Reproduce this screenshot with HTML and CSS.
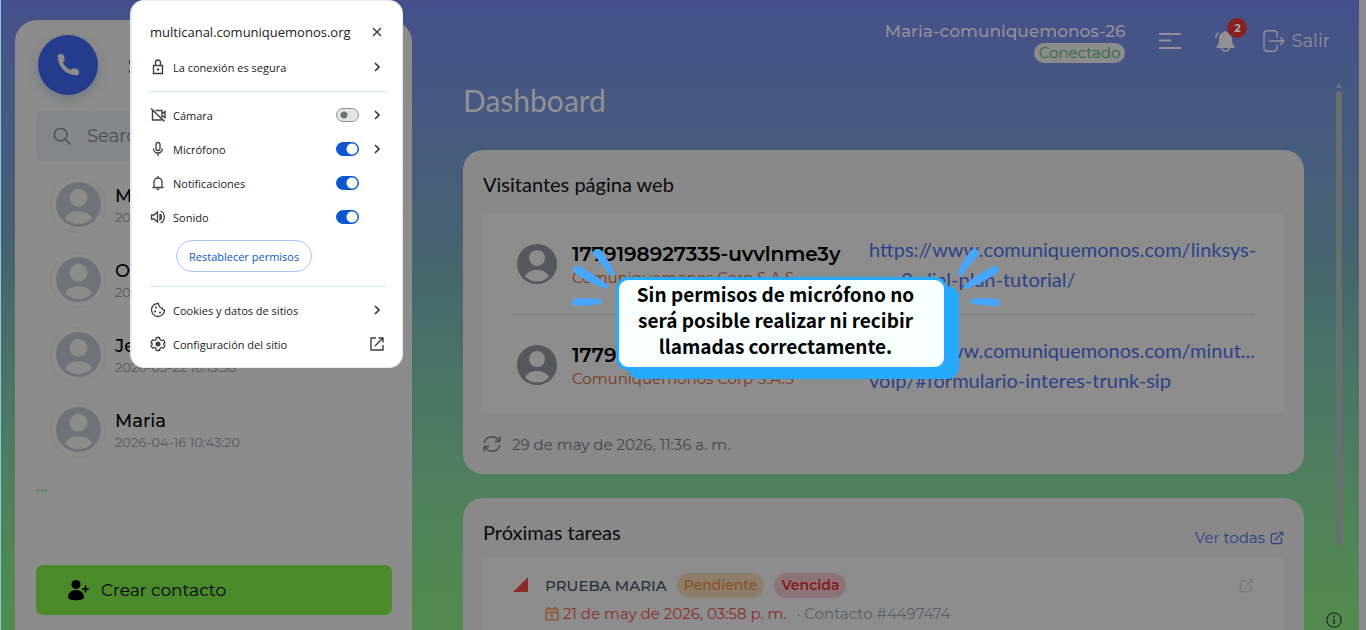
FILE: index.html
```html
<!DOCTYPE html>
<html lang="es">
<head>
    <meta charset="UTF-8">
    <meta name="viewport" content="width=device-width, initial-scale=1.0">
    <title>Dashboard</title>
    <link rel="stylesheet" href="styles.css">
</head>
<body>
    <!-- iconos compartidos -->
    <svg class="sprite" aria-hidden="true">
        <symbol id="user" viewBox="0 0 40 40">
            <path fill="currentColor" fill-rule="evenodd" d="M20 0a20 20 0 1 0 0 40a20 20 0 1 0 0-40zM20 6a8 8 0 1 1 0 16a8 8 0 1 1 0-16zM8 32.500C10 28 15 26 20 26s10 2 12 6.500C29 35.500 25 37.500 20 37.500S11 35.500 8 32.500z"/>
        </symbol>
        <symbol id="chevron" viewBox="0 0 12 12">
            <path fill="none" stroke="currentColor" stroke-width="1.600" d="M4 2l4 4l-4 4"/>
        </symbol>
        <symbol id="external" viewBox="0 0 16 16">
            <path fill="none" stroke="currentColor" stroke-width="1.400" stroke-linecap="round" stroke-linejoin="round" d="M8 3H3.500A2 2 0 0 0 1.500 5v7.500a2 2 0 0 0 2 2H11a2 2 0 0 0 2-2V8M6 10l8.500-8.500M11 1.500h3.500V5"/>
        </symbol>
    </svg>

    <div class="page">
        <aside class="sidebar">
            <div class="phone">
                <button class="phone-btn" aria-label="Llamar">
                    <svg viewBox="0 0 24 24" width="24" height="24"><path fill="none" stroke="currentColor" stroke-width="4" stroke-linecap="round" d="M4 4c0 9 7 16 16 16"/><path fill="currentColor" d="M1.500 3.500Q1.500 1 4 1h1.500Q7.500 1 8 3l.7 3.500Q9 8.500 7 9L4 9zM20.500 22.500Q23 22.500 23 20v-1.500Q23 16.500 21 16l-3.500-.7Q15.500 15 15 17v3z"/></svg>
                </button>
                <h2>S</h2>
            </div>
            <label class="search">
                <svg viewBox="0 0 20 20" width="18" height="18"><path fill="none" stroke="currentColor" stroke-width="1.600" stroke-linecap="round" d="M8.500 1.500a7 7 0 1 0 0 14a7 7 0 1 0 0-14M13.500 13.500L19 19"/></svg>
                <input type="search" placeholder="Search" aria-label="Search">
            </label>
            <ul class="contacts">
                <li>
                    <span class="ring"><svg><use href="#user"/></svg></span>
                    <div><strong>M</strong><small>20</small></div>
                </li>
                <li>
                    <span class="ring"><svg><use href="#user"/></svg></span>
                    <div><strong>O</strong><small>20</small></div>
                </li>
                <li>
                    <span class="ring"><svg><use href="#user"/></svg></span>
                    <div><strong>Je</strong><small>2026-05-22 16:13:38</small></div>
                </li>
                <li>
                    <span class="ring"><svg><use href="#user"/></svg></span>
                    <div><strong>Maria</strong><small>2026-04-16 10:43:20</small></div>
                </li>
            </ul>
            <p class="more">...</p>
            <button class="create">
                <svg viewBox="0 0 22 22" width="22" height="22"><circle cx="9" cy="5.500" r="4.500" fill="currentColor"/><path fill="currentColor" d="M1 19c0-5 3-8 8-8s8 3 8 8c-2 3-14 3-16 0z"/><path stroke="currentColor" stroke-width="1.600" d="M18.500 6.500v7M15 10h7"/></svg>
                Crear contacto
            </button>
        </aside>

        <div class="main">
            <header class="topbar">
                <div class="account">
                    <span class="username">Maria-comuniquemonos-26</span>
                    <span class="status">Conectado</span>
                </div>
                <button class="icon-btn menu" aria-label="Menú">
                    <svg viewBox="0 0 22 16" width="22" height="16"><path stroke="currentColor" stroke-width="2" d="M0 1h22M0 7.500h12M0 15h22"/></svg>
                </button>
                <button class="icon-btn bell" aria-label="Notificaciones">
                    <svg viewBox="0 0 20 22" width="20" height="22"><path fill="currentColor" d="M10.500 1a1.500 1.500 0 0 1 1.500 1c4 .7 5 4 5 7.500c0 4 1 5.500 2.500 7q.5 1.500-1 1.500h-16q-1.500 0-1-1.500C3 15 4 13.500 4 9.500C4 6 5 2.700 9 2a1.500 1.500 0 0 1 1.500-1z"/><path fill="none" stroke="currentColor" stroke-width="1.500" d="M7 18a3.500 3 0 0 0 7 0M.8 8C.8 5 2 3.500 3.500 2.200"/></svg>
                    <span class="badge">2</span>
                </button>
                <button class="icon-btn logout">
                    <svg viewBox="0 0 22 22" width="22" height="22"><path fill="none" stroke="currentColor" stroke-width="1.400" stroke-linecap="round" stroke-linejoin="round" d="M14 7V3.500A3 3 0 0 0 11 .8H4A3 3 0 0 0 1 3.500v15a3 3 0 0 0 3 2.700h7a3 3 0 0 0 3-2.700V15M6.500 11h14.500M17.500 7.500L21 11l-3.500 3.500"/></svg>
                    Salir
                </button>
            </header>

            <div class="scroll-area">
                <main class="content">
                    <h1>Dashboard</h1>

                    <section class="card">
                        <h3>Visitantes página web</h3>
                        <div class="panel visitors">
                            <article class="visitor">
                                <svg class="avatar"><use href="#user"/></svg>
                                <div><strong>1779198927335-uvvlnme3y</strong><span>Comuniquemonos Corp S.A.S</span></div>
                                <a href="#">https://www.comuniquemonos.com/linksys-<br>pap2-dial-plan-tutorial/</a>
                            </article>
                            <article class="visitor">
                                <svg class="avatar"><use href="#user"/></svg>
                                <div><strong>1779</strong><span>Comuniquemonos Corp S.A.S</span></div>
                                <a href="#">https://www.comuniquemonos.com/minut...<br>voip/#formulario-interes-trunk-sip</a>
                            </article>
                        </div>
                        <p class="updated">
                            <svg viewBox="0 0 18 18" width="18" height="18"><path fill="none" stroke="currentColor" stroke-width="1.400" stroke-linecap="round" stroke-linejoin="round" d="M1.500 7.500C2.500 4 5.500 1.800 9 1.800c3 0 5.500 1.500 7.500 4.500M16.800 2v4.500h-4.500M16.500 10.500c-1 3.500-4 5.700-7.500 5.700c-3 0-5.500-1.500-7.500-4.500M1.200 16v-4.500h4.500"/></svg>
                            29 de may de 2026, 11:36 a. m.
                        </p>
                    </section>

                    <section class="card">
                        <div class="card-head">
                            <h3>Próximas tareas</h3>
                            <a href="#">Ver todas <svg width="14" height="14"><use href="#external"/></svg></a>
                        </div>
                        <div class="panel task">
                            <svg class="priority" viewBox="0 0 15 15" width="15" height="15"><path fill="currentColor" d="M15 0v15H0z"/></svg>
                            <div class="task-body">
                                <div class="task-title">
                                    <span>PRUEBA MARIA</span>
                                    <em class="tag pending">Pendiente</em>
                                    <em class="tag overdue">Vencida</em>
                                </div>
                                <div class="task-date">
                                    <svg viewBox="0 0 14 14" width="14" height="14"><path fill="none" stroke="currentColor" stroke-width="1.400" d="M2.500 2h9q1.500 0 1.500 1.500v8q0 1.500-1.500 1.500h-9Q1 13 1 11.500v-8Q1 2 2.500 2zM1 5.500h12M4 0v3M10 0v3M5.500 8H7v3.500"/></svg>
                                    <time>21 de may de 2026, 03:58 p. m.</time>
                                    <span>· Contacto #4497474</span>
                                </div>
                            </div>
                            <a class="open" href="#" aria-label="Abrir tarea"><svg width="15" height="15"><use href="#external"/></svg></a>
                        </div>
                    </section>
                </main>
                <div class="scrollbar"><i class="arrow"></i><i class="thumb"></i></div>
            </div>
        </div>
    </div>

    <svg class="info" viewBox="0 0 16 16" width="16" height="16"><circle cx="8" cy="8" r="7.200" fill="none" stroke="currentColor" stroke-width="1.200"/><path stroke="currentColor" stroke-width="1.600" d="M8 3.500v2M8 7v5"/></svg>

    <!-- permisos del sitio -->
    <div class="popup">
        <div class="popup-head">
            <b>multicanal.comuniquemonos.org</b>
            <button aria-label="Cerrar"><svg viewBox="0 0 10 10" width="10" height="10"><path stroke="currentColor" stroke-width="1.300" d="M1 1l8 8M9 1L1 9"/></svg></button>
        </div>
        <div class="row">
            <svg class="ico" viewBox="0 0 16 16"><path fill="none" stroke="currentColor" stroke-width="1.400" d="M3.500 6.500h9v8h-9zM5.500 6V3.500a2.500 2.500 0 0 1 5 0V6"/><circle cx="8" cy="10.500" r="1.200" fill="currentColor"/></svg>
            <span>La conexión es segura</span>
            <svg class="chev"><use href="#chevron"/></svg>
        </div>
        <hr>
        <div class="row">
            <svg class="ico" viewBox="0 0 16 16"><path fill="none" stroke="currentColor" stroke-width="1.400" d="M1 1.500l13.500 13M5.500 3.500H12V7l3-2.500v6L12 8.500v2M2.500 3.500v9.500H11.500"/></svg>
            <label for="cam">Cámara</label>
            <input type="checkbox" id="cam" class="switch">
            <svg class="chev"><use href="#chevron"/></svg>
        </div>
        <div class="row">
            <svg class="ico" viewBox="0 0 16 16"><path fill="none" stroke="currentColor" stroke-width="1.300" d="M8 1.500A2 2 0 0 1 10 3.500v4a2 2 0 0 1-4 0v-4A2 2 0 0 1 8 1.500zM3.500 7.500a4.500 4.500 0 0 0 9 0M8 12v3"/></svg>
            <label for="mic">Micrófono</label>
            <input type="checkbox" id="mic" class="switch" checked>
            <svg class="chev"><use href="#chevron"/></svg>
        </div>
        <div class="row">
            <svg class="ico" viewBox="0 0 16 16"><path fill="none" stroke="currentColor" stroke-width="1.300" d="M2.500 12.500h11M4 12.500V7a4 4 0 0 1 8 0v5.500M8 1v2"/><path fill="currentColor" d="M6.500 13.500h3a1.500 1.500 0 0 1-3 0z"/></svg>
            <label for="notif">Notificaciones</label>
            <input type="checkbox" id="notif" class="switch" checked>
            <i class="chev"></i>
        </div>
        <div class="row">
            <svg class="ico" viewBox="0 0 16 16"><path fill="none" stroke="currentColor" stroke-width="1.300" d="M1.500 6v4h2.500l3.500 3V3L4 6zM10 5v6c2-1 2-5 0-6M10.500 2c5 1.500 5 10.500 0 12"/></svg>
            <label for="snd">Sonido</label>
            <input type="checkbox" id="snd" class="switch" checked>
            <i class="chev"></i>
        </div>
        <button class="reset">Restablecer permisos</button>
        <hr>
        <div class="row">
            <svg class="ico" viewBox="0 0 16 16"><path fill="none" stroke="currentColor" stroke-width="1.300" d="M8.500 1.500a6.500 6.500 0 1 0 6 6.500q-2 .5-2.500-2q-3 0-3.500-4.500z"/><g fill="currentColor"><circle cx="6" cy="5.500" r="1.100"/><circle cx="5" cy="9.500" r="1.100"/><circle cx="10" cy="10.500" r="1.100"/></g></svg>
            <span>Cookies y datos de sitios</span>
            <svg class="chev"><use href="#chevron"/></svg>
        </div>
        <div class="row">
            <svg class="ico" viewBox="0 0 16 16"><path fill="none" stroke="currentColor" stroke-width="1.300" stroke-linejoin="round" d="M6.500 1.500h3l.5 2l1.500 1l2-.6l1.500 2.600L13.500 8l1.500 1.500l-1.500 2.600l-2-.6l-1.500 1l-.5 2h-3l-.5-2l-1.500-1l-2 .6L1 9.500L2.500 8L1 6.500l1.500-2.600l2 .6l1.500-1z"/><circle cx="8" cy="8" r="2.500" fill="currentColor"/></svg>
            <span>Configuración del sitio</span>
            <svg class="ico" viewBox="0 0 16 16"><path fill="none" stroke="currentColor" stroke-width="1.400" d="M7 2H2v12h12V9M9.500 2H14v4.500M6 10l8-8"/></svg>
        </div>
    </div>

    <!-- aviso -->
    <div class="callout">
        <svg class="rays left" viewBox="0 0 48 58" width="48" height="58"><g fill="#47a7ff"><path d="M22 5Q22 0 27 0Q30 0 32 4Q42 18 43 25Q42 29 38 25Q32 17 22 5z"/><path d="M4 17Q8 16 13 20Q32 31 37 37Q38 41 33 39Q20 35 4 24Q1 21 4 17z"/><path d="M4 50Q12 48 28 50Q34 52 30 54Q20 57 5 57Q0 57 1 53Q1 51 4 50z"/></g></svg>
        <p>Sin permisos de micrófono no será posible realizar ni recibir llamadas correctamente.</p>
        <svg class="rays right" viewBox="0 0 48 58" width="48" height="58"><g fill="#47a7ff"><path d="M22 5Q22 0 27 0Q30 0 32 4Q42 18 43 25Q42 29 38 25Q32 17 22 5z"/><path d="M4 17Q8 16 13 20Q32 31 37 37Q38 41 33 39Q20 35 4 24Q1 21 4 17z"/><path d="M4 50Q12 48 28 50Q34 52 30 54Q20 57 5 57Q0 57 1 53Q1 51 4 50z"/></g></svg>
    </div>
</body>
</html>
```

FILE: styles.css
```css
*{
    box-sizing: border-box;
}
body{
    margin: 0;
    height: 100vh;
    overflow: hidden;
    position: relative;
    background-color: #8c8c8c;
    font-family: Montserrat, Inter, sans-serif;
    color: #000;
}
h1, h2, h3, p, ul{
    margin: 0;
    padding: 0;
    font-weight: 400;
}
button{
    font-family: inherit;
    border: none;
    padding: 0;
    background: none;
}
a{
    color: #2d4189;
    text-decoration: none;
}
.sprite{
    position: absolute;
    width: 0;
    height: 0;
}
.page{
    display: flex;
    gap: 51px;
    height: 100vh;
    margin-right: 7px;
    padding-left: 14px;
    border-left: 1px solid #8ac6e0;
    background: linear-gradient(#45508b 0%, #465a7f 20%, #46636f 40%, #4a7566 60%, #4f805c 78%, #528a50 97%);
}

/* sidebar */
.sidebar{
    flex: 0 0 397px;
    margin-top: 20px;
    padding: 15px 20px 0 21px;
    border-radius: 22px 22px 0 0;
    background-color: #8c8c8c;
}
.phone{
    display: flex;
    align-items: center;
    gap: 30px;
    padding-left: 2px;
}
.phone h2{
    font-size: 24px;
    font-weight: 600;
}
.phone-btn{
    display: flex;
    align-items: center;
    justify-content: center;
    width: 60px;
    height: 60px;
    border-radius: 50%;
    background-color: #253c8c;
    color: #8c8c8c;
    box-shadow: 0 4px 12px rgba(37, 60, 100, 0.25);
}
.search{
    display: flex;
    align-items: center;
    gap: 14px;
    height: 50px;
    margin-top: 16px;
    padding: 0 17px;
    border-radius: 8px;
    background-color: #85868a;
    color: #4a4d54;
}
.search input{
    flex: 1;
    min-width: 0;
    border: none;
    background: none;
    font-family: inherit;
    font-size: 18px;
}
.search input::placeholder{
    color: #4a4d54;
}
.contacts{
    margin-top: 6px;
    list-style: none;
}
.contacts li{
    display: flex;
    align-items: center;
    gap: 9px;
    height: 75px;
    padding-left: 14px;
}
.ring{
    display: flex;
    align-items: center;
    justify-content: center;
    width: 56px;
    height: 56px;
    border: 1px solid #858585;
    border-radius: 50%;
    color: #707279;
}
.ring svg{
    width: 45px;
    height: 45px;
}
.contacts strong,
.contacts small{
    display: block;
}
.contacts strong{
    font-size: 18px;
    font-weight: 500;
    line-height: 24px;
}
.contacts small{
    font-size: 13px;
    font-weight: 400;
    line-height: 18px;
    color: #56575c;
}
.more{
    height: 80px;
    margin-top: 10px;
    font-size: 16px;
    font-weight: 600;
    color: #4c8a50;
}
.create{
    display: flex;
    align-items: center;
    gap: 12px;
    width: 100%;
    height: 50px;
    margin-top: 8px;
    padding-left: 31px;
    border-radius: 7px;
    background-color: #4b8a2b;
    font-size: 17px;
    color: #000;
}

/* cabecera */
.main{
    flex: 1;
    display: flex;
    flex-direction: column;
    min-width: 0;
}
.topbar{
    display: flex;
    justify-content: flex-end;
    align-items: center;
    height: 82px;
    padding-right: 29px;
    color: #919196;
}
.account{
    display: flex;
    flex-direction: column;
    align-items: flex-end;
    margin-right: 34px;
}
.username{
    font-size: 17px;
    font-weight: 500;
    line-height: 24px;
}
.status{
    padding: 0 5px;
    border-radius: 10px;
    background-color: #8c8c8c;
    font-size: 15px;
    line-height: 20px;
    color: #2b6b40;
}
.icon-btn{
    display: flex;
    align-items: center;
    gap: 6px;
    font-size: 18px;
    color: #919196;
}
.bell{
    position: relative;
    margin: 0 28px 0 34px;
}
.badge{
    position: absolute;
    top: -12px;
    right: -12px;
    width: 20px;
    border-radius: 50%;
    background-color: #872025;
    font-size: 11px;
    font-weight: 700;
    line-height: 20px;
    text-align: center;
    color: #b0a0a0;
}

/* contenido */
.scroll-area{
    flex: 1;
    display: flex;
    gap: 32px;
    min-height: 0;
    padding-right: 17px;
}
.content{
    flex: 1;
    min-width: 0;
}
h1{
    font-family: Lato, sans-serif;
    font-size: 30px;
    line-height: 36px;
    margin-bottom: 32px;
    color: #919196;
}
h3{
    font-family: Lato, sans-serif;
    font-size: 20px;
    line-height: 24px;
    color: #0a0a0c;
}
.card{
    margin-bottom: 24px;
    padding: 22px 20px 0;
    border-radius: 20px;
    background-color: #898989;
}
.panel{
    background-color: #8d8d8d;
}
.visitors{
    margin-top: 18px;
    padding: 0 30px;
}
.visitor{
    display: grid;
    grid-template-columns: 40px 282px 1fr;
    align-items: center;
    column-gap: 15px;
    height: 100px;
    padding-left: 4px;
}
.visitor + .visitor{
    border-top: 1px solid #7c7c7c;
}
.avatar{
    width: 40px;
    height: 40px;
    color: #55575d;
}
.visitor div{
    padding-top: 2px;
}
.visitor strong,
.visitor span{
    display: block;
}
.visitor strong{
    font-size: 20px;
    font-weight: 600;
    line-height: 26px;
}
.visitor span{
    font-size: 15px;
    line-height: 22px;
    color: #7a3824;
}
.visitor a{
    font-family: Lato, sans-serif;
    font-size: 20px;
    line-height: 30px;
    white-space: nowrap;
}
.updated{
    display: flex;
    align-items: center;
    gap: 11px;
    height: 60px;
    font-size: 15px;
    color: #45474c;
}
.card-head{
    display: flex;
    justify-content: space-between;
    align-items: flex-end;
}
.card-head a{
    display: flex;
    align-items: center;
    gap: 5px;
    padding-top: 9px;
    font-size: 15px;
    line-height: 18px;
}
.card-head h3{
    align-self: flex-start;
}
.task{
    display: flex;
    align-items: flex-start;
    gap: 17px;
    height: 100px;
    margin-top: 11px;
    padding: 15px 30px;
}
.priority{
    margin-top: 4px;
    color: #8a2a28;
}
.task-body{
    flex: 1;
}
.task-title,
.task-date{
    display: flex;
    align-items: center;
    gap: 10px;
    height: 25px;
    font-size: 15px;
    font-weight: 500;
    color: #262e3a;
}
.tag{
    padding: 0 7px;
    border-radius: 13px;
    font-size: 14px;
    font-style: normal;
    line-height: 25px;
}
.pending{
    background-color: #8c7e69;
    color: #8a4f2a;
}
.overdue{
    background-color: #8c7476;
    color: #851a1e;
    font-weight: 600;
}
.task-date{
    gap: 4px;
    margin-top: 3px;
    font-size: 15px;
    font-weight: 400;
    color: #8a2d28;
}
.task-date svg{
    color: #8f5436;
}
.task-date span{
    margin-left: 6px;
    color: #5a5d63;
}
.open{
    margin-top: 5px;
    color: #74777b;
}
.scrollbar{
    width: 6px;
    padding-top: 1px;
}
.scrollbar i{
    display: block;
}
.arrow{
    border: 3px solid transparent;
    border-top: none;
    border-bottom: 5px solid #68757b;
}
.thumb{
    height: 455px;
    margin-top: 3px;
    border-radius: 3px;
    background-color: #68706f;
}
.info{
    position: absolute;
    right: 24px;
    bottom: 2px;
    color: #232b25;
}

/* popup de permisos */
.popup{
    position: absolute;
    top: 0;
    left: 130px;
    width: 273px;
    padding: 16px 16px 6px 18px;
    border: 1px solid #e6edf2;
    border-left-width: 2px;
    border-radius: 14px;
    background-color: #fff;
    font-family: "Open Sans", "Noto Sans", sans-serif;
    font-size: 11px;
    font-weight: 500;
    color: #202124;
}
.popup-head{
    display: flex;
    justify-content: space-between;
    align-items: center;
    height: 30px;
    margin-bottom: 3px;
    padding-right: 4px;
    font-size: 13px;
}
.popup-head b{
    font-weight: 500;
}
.popup-head button{
    display: flex;
    color: #303236;
}
.row{
    display: flex;
    align-items: center;
    height: 34px;
    padding-right: 1px;
}
.row span,
.row label{
    flex: 1;
    margin-left: 7px;
}
.ico{
    width: 16px;
    height: 16px;
    color: #3c3f43;
}
.chev{
    width: 12px;
    height: 12px;
    margin: 0 2px 0 12px;
    color: #303236;
}
.popup hr{
    margin: 7px 0 6px;
    border: none;
    border-top: 1px solid #cfe0fa;
}
.switch{
    appearance: none;
    width: 23px;
    height: 14px;
    margin: 0;
    border: 1px solid #8f9292;
    border-radius: 7px;
    background: radial-gradient(circle at 7px 6px, #6f7272 3px, #e3e6e5 4px);
}
.switch:checked{
    border-color: #0b57d0;
    background: radial-gradient(circle at 15px 6px, #fff 5px, #0b57d0 6px);
}
.reset{
    display: block;
    height: 32px;
    margin: 6px 0 14px 26px;
    padding: 0 12px;
    border: 1px solid #a8c7fa;
    border-radius: 16px;
    font-size: 11px;
    font-weight: 500;
    color: #0b57d0;
}

/* aviso */
.callout{
    position: absolute;
    top: 277px;
    left: 616px;
    width: 331px;
    height: 93px;
    padding: 1px 26px 0 14px;
    border: 3px solid #25aaff;
    border-radius: 12px;
    background-color: #f7ffff;
    box-shadow: 12px 9px 0 #25aaff;
    font-family: "Noto Sans CJK SC", "Noto Sans", sans-serif;
    font-size: 19px;
    line-height: 26px;
    text-align: center;
}
.callout p{
    font-weight: 700;
}
.rays{
    position: absolute;
    top: -31px;
}
.rays.left{
    left: -48px;
}
.rays.right{
    right: -57px;
    transform: scaleX(-1);
}
```
